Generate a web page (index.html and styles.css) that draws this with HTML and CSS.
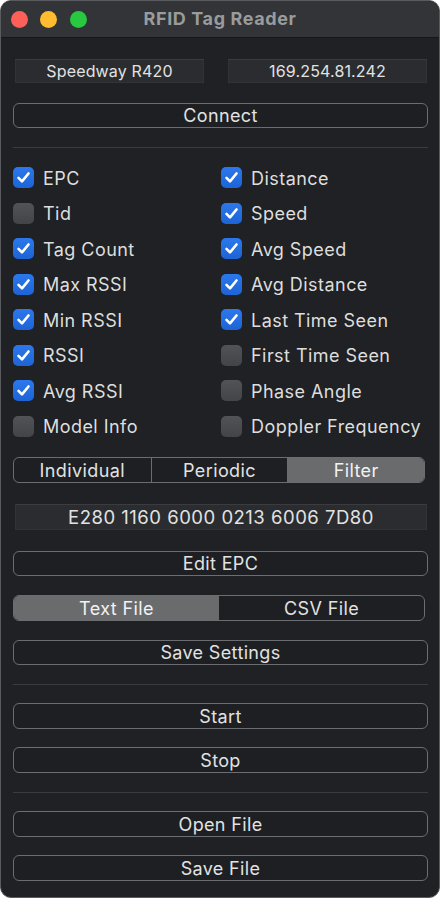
FILE: index.html
```html
<!DOCTYPE html>
<html>
<head>
<meta charset="utf-8">
<link rel="stylesheet" href="styles.css">
</head>
<body>
<div class="window">
  <div class="titlebar">
    <div class="lights">
      <span class="light red"></span>
      <span class="light yellow"></span>
      <span class="light green"></span>
    </div>
    <div class="title">RFID Tag Reader</div>
    <div></div>
  </div>
  <div class="content">
    <div class="fields">
      <div class="field">Speedway R420</div>
      <div class="field">169.254.81.242</div>
    </div>
    <div class="btn mt20">Connect</div>
    <div class="sep mt19"></div>
    <div class="checks">
      <div class="check"><span class="box on"><svg viewBox="0 0 21 21"><path d="M5.5 10.8 L9 14.3 L15.5 6.5"/></svg></span>EPC</div>
      <div class="check"><span class="box on"><svg viewBox="0 0 21 21"><path d="M5.5 10.8 L9 14.3 L15.5 6.5"/></svg></span>Distance</div>
      <div class="check"><span class="box"></span>Tid</div>
      <div class="check"><span class="box on"><svg viewBox="0 0 21 21"><path d="M5.5 10.8 L9 14.3 L15.5 6.5"/></svg></span>Speed</div>
      <div class="check"><span class="box on"><svg viewBox="0 0 21 21"><path d="M5.5 10.8 L9 14.3 L15.5 6.5"/></svg></span>Tag Count</div>
      <div class="check"><span class="box on"><svg viewBox="0 0 21 21"><path d="M5.5 10.8 L9 14.3 L15.5 6.5"/></svg></span>Avg Speed</div>
      <div class="check"><span class="box on"><svg viewBox="0 0 21 21"><path d="M5.5 10.8 L9 14.3 L15.5 6.5"/></svg></span>Max RSSI</div>
      <div class="check"><span class="box on"><svg viewBox="0 0 21 21"><path d="M5.5 10.8 L9 14.3 L15.5 6.5"/></svg></span>Avg Distance</div>
      <div class="check"><span class="box on"><svg viewBox="0 0 21 21"><path d="M5.5 10.8 L9 14.3 L15.5 6.5"/></svg></span>Min RSSI</div>
      <div class="check"><span class="box on"><svg viewBox="0 0 21 21"><path d="M5.5 10.8 L9 14.3 L15.5 6.5"/></svg></span>Last Time Seen</div>
      <div class="check"><span class="box on"><svg viewBox="0 0 21 21"><path d="M5.5 10.8 L9 14.3 L15.5 6.5"/></svg></span>RSSI</div>
      <div class="check"><span class="box"></span>First Time Seen</div>
      <div class="check"><span class="box on"><svg viewBox="0 0 21 21"><path d="M5.5 10.8 L9 14.3 L15.5 6.5"/></svg></span>Avg RSSI</div>
      <div class="check"><span class="box"></span>Phase Angle</div>
      <div class="check"><span class="box"></span>Model Info</div>
      <div class="check"><span class="box"></span>Doppler Frequency</div>
    </div>
    <div class="segmented seg3 mt13">
      <div class="seg">Individual</div>
      <div class="seg">Periodic</div>
      <div class="seg active">Filter</div>
    </div>
    <div class="field epc mt21">E280 1160 6000 0213 6006 7D80</div>
    <div class="btn mt21">Edit EPC</div>
    <div class="segmented seg2 mt19">
      <div class="seg active">Text File</div>
      <div class="seg">CSV File</div>
    </div>
    <div class="btn mt19">Save Settings</div>
    <div class="sep mt19"></div>
    <div class="btn tall mt18">Start</div>
    <div class="btn tall mt18">Stop</div>
    <div class="sep mt19"></div>
    <div class="btn tall mt18">Open File</div>
    <div class="btn tall mt18">Save File</div>
  </div>
</div>
</body>
</html>
```

FILE: styles.css
```css
html, body {
  margin: 0;
  padding: 0;
}
body {
  background: #ffffff;
  width: 442px;
  height: 904px;
  overflow: hidden;
  font-family: Inter, "Liberation Sans", sans-serif;
}
.window {
  box-sizing: border-box;
  width: 440px;
  height: 898px;
  background: #1f2124;
  border: 1px solid #5a5b5e;
  border-radius: 11px;
  overflow: hidden;
}
.titlebar {
  height: 36px;
  background: #323437;
  border-bottom: 1px solid #151618;
  display: grid;
  grid-template-columns: 1fr auto 1fr;
  align-items: center;
}
.lights {
  display: flex;
  gap: 12.5px;
  padding-left: 9.5px;
}
.light {
  width: 17px;
  height: 17px;
  border-radius: 50%;
}
.red { background: #fe5f57; }
.yellow { background: #febc2e; }
.green { background: #28c840; }
.title {
  font-size: 18px;
  font-weight: 700;
  color: #9a9b9c;
  letter-spacing: 0.6px;
  margin-top: -2px;
}
.content {
  padding: 0 11px 0 12px;
  display: flex;
  flex-direction: column;
}
.mt13 { margin-top: 13px; }
.mt18 { margin-top: 18px; }
.mt19 { margin-top: 19px; }
.mt20 { margin-top: 20px; }
.mt21 { margin-top: 21px; }
.fields {
  margin-top: 21px;
  display: grid;
  grid-template-columns: 189px 199px;
  column-gap: 24px;
  padding-left: 2px;
}
.field {
  box-sizing: border-box;
  height: 24px;
  background: #2a2c2f;
  border: 1px solid #313336;
  border-top-color: #3a3c3f;
  color: #e2e2e2;
  font-size: 16px;
  letter-spacing: 0.15px;
  display: flex;
  align-items: center;
  justify-content: center;
}
.field.epc {
  height: 26px;
  margin-left: 2px;
  margin-right: 1px;
  font-size: 18.5px;
  letter-spacing: 0.5px;
}
.btn {
  box-sizing: border-box;
  height: 25px;
  border: 1.5px solid #6c6d70;
  border-radius: 6px;
  background: #1d1f22;
  color: #e2e2e2;
  font-size: 18px;
  letter-spacing: 0.35px;
  display: flex;
  align-items: center;
  justify-content: center;
}
.btn.tall { height: 26px; }
.sep {
  height: 1px;
  background: #393b3e;
}
.checks {
  margin-top: 12px;
  display: grid;
  grid-template-columns: 208px 1fr;
  grid-auto-rows: 35.5px;
}
.check {
  display: flex;
  align-items: center;
  gap: 9px;
  color: #dedede;
  font-size: 18px;
  letter-spacing: 0.45px;
  white-space: nowrap;
  padding-top: 1px;
}
.box {
  box-sizing: border-box;
  width: 21px;
  height: 21px;
  border-radius: 5px;
  background: linear-gradient(#525356, #434447);
  flex: none;
  display: flex;
  margin-top: -1px;
}
.box.on {
  background: linear-gradient(#2b78ec, #1d64d6);
}
.box svg {
  width: 21px;
  height: 21px;
}
.box path {
  fill: none;
  stroke: #ffffff;
  stroke-width: 2.6;
  stroke-linecap: round;
  stroke-linejoin: round;
}
.segmented {
  box-sizing: border-box;
  height: 26px;
  margin-right: 3px;
  border: 1.5px solid #6c6d70;
  border-radius: 6px;
  display: grid;
  overflow: hidden;
  background: #1d1f22;
}
.seg3 { grid-template-columns: 1fr 1fr 1fr; }
.seg2 { grid-template-columns: 1fr 1fr; }
.seg {
  display: flex;
  align-items: center;
  justify-content: center;
  color: #e2e2e2;
  font-size: 18px;
  letter-spacing: 0.4px;
}
.seg3 .seg + .seg { border-left: 1px solid #6c6d70; }
.seg.active {
  background: #6a6b6d;
  color: #f2f2f2;
  border-left: none;
}
```
